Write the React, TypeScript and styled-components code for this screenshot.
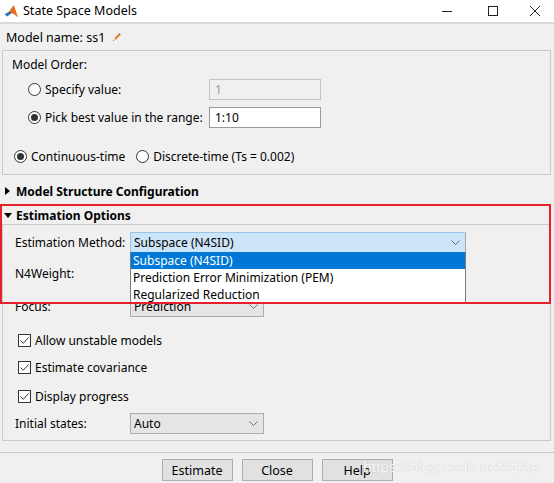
import React from "react";
import styled, { createGlobalStyle } from "styled-components";

const GlobalStyle = createGlobalStyle`
  html, body {
    margin: 0;
    padding: 0;
  }
  body {
    width: 554px;
    height: 483px;
    overflow: hidden;
    background: #f0f0f0;
    font-family: "Noto Sans", "Open Sans", sans-serif;
    font-size: 12px;
    color: #000;
    white-space: nowrap;
  }
  * {
    box-sizing: border-box;
  }
`;

const MatlabIcon = () => (
  <svg width="15" height="15" viewBox="0 0 15 15">
    <path d="M0.5 10.5 L5 7.5 L7.5 9 L3.5 12.5 Z" fill="#2f74b5" />
    <path d="M5 7.5 L9.8 1 L14 13.5 L10.5 10.5 L7.5 9 Z" fill="#e86a1d" />
    <path d="M9.8 1 L11.6 6.5 L14 13.5 Z" fill="#b3301c" />
    <path d="M5 7.5 L7.5 9 L6.5 9.8 Z" fill="#1d4f87" />
  </svg>
);

const PencilIcon = () => (
  <svg width="9" height="9" viewBox="0 0 9 9">
    <path d="M2.2 5.2 L6.4 1 L8 2.6 L3.8 6.8 Z" fill="#d98a2b" />
    <path d="M6.4 1 L7.2 0.2 L8.8 1.8 L8 2.6 Z" fill="#c0504d" />
    <path d="M2.2 5.2 L3.8 6.8 L1 8 Z" fill="#e8d0a8" />
    <path d="M1 8 L1.5 6.8 L2.2 7.5 Z" fill="#555" />
  </svg>
);

const Chevron = () => (
  <svg width="9" height="5" viewBox="0 0 9 5">
    <path d="M0.5 0.5 L4.5 4.5 L8.5 0.5" fill="none" stroke="#6d6d6d" strokeWidth="1" />
  </svg>
);

const CheckMark = () => (
  <svg width="11" height="11" viewBox="0 0 11 11">
    <path d="M1.5 5.5 L4.3 8.3 L9.5 2.5" fill="none" stroke="#333" strokeWidth="1" />
  </svg>
);

const Window = styled.div`
  position: relative;
  width: 554px;
  height: 483px;
  display: flex;
  flex-direction: column;
  background: #f0f0f0;
`;

const TitleBar = styled.div`
  height: 24px;
  background: #fff;
  border-bottom: 2px solid #dadada;
  display: flex;
  align-items: center;
  padding-left: 4px;
`;

const TitleText = styled.span`
  font-size: 12.5px;
  margin-left: 4px;
  flex: 1;
  line-height: 20px;
`;

const CaptionButton = styled.div<{ w: number }>`
  width: ${({ w }) => w}px;
  height: 22px;
  display: flex;
  align-items: center;
  justify-content: center;
`;

const NameRow = styled.div`
  height: 26px;
  display: flex;
  align-items: center;
  padding-left: 6px;
  gap: 7px;
  font-size: 12.5px;
`;

const Panel = styled.div<{ h: number }>`
  height: ${({ h }) => h}px;
  margin: 0 3px 0 2px;
  border: 1px solid #cacaca;
  display: flex;
  flex-direction: column;
`;

const PanelLabel = styled.div`
  height: 26px;
  display: flex;
  align-items: center;
  padding-left: 9px;
`;

const Row = styled.div<{ mt?: number; pl?: number; h?: number }>`
  display: flex;
  align-items: center;
  height: ${({ h }) => h ?? 21}px;
  margin-top: ${({ mt }) => mt ?? 0}px;
  padding-left: ${({ pl }) => pl ?? 0}px;
`;

const OptionCell = styled.div<{ w?: number; ml?: number }>`
  display: flex;
  align-items: center;
  gap: 4px;
  width: ${({ w }) => (w ? `${w}px` : "auto")};
  margin-left: ${({ ml }) => ml ?? 0}px;
  flex-shrink: 0;
`;

const Radio = styled.span<{ checked?: boolean }>`
  width: 13px;
  height: 13px;
  border-radius: 50%;
  border: 1px solid #333;
  background: #fff;
  display: flex;
  align-items: center;
  justify-content: center;
  flex-shrink: 0;

  &::after {
    content: "";
    width: 7px;
    height: 7px;
    border-radius: 50%;
    background: ${({ checked }) => (checked ? "#333" : "transparent")};
  }
`;

const Check = styled.span`
  width: 13px;
  height: 13px;
  border: 1px solid #333;
  background: #fff;
  display: flex;
  align-items: center;
  justify-content: center;
  flex-shrink: 0;
`;

const TextField = styled.div<{ disabled?: boolean }>`
  width: 112px;
  height: 21px;
  border: 1px solid ${({ disabled }) => (disabled ? "#c4c4c4" : "#9a9a9a")};
  background: ${({ disabled }) => (disabled ? "#f0f0f0" : "#fff")};
  color: ${({ disabled }) => (disabled ? "#9c9c9c" : "#000")};
  display: flex;
  align-items: center;
  padding-left: 5px;
`;

const SectionHeader = styled.div<{ h: number }>`
  height: ${({ h }) => h}px;
  display: flex;
  align-items: center;
  padding-left: 4px;
  gap: 4px;
  font-weight: bold;
`;

const Triangle = styled.span<{ open?: boolean }>`
  width: 0;
  height: 0;
  margin-left: ${({ open }) => (open ? 0 : 1)}px;
  margin-right: ${({ open }) => (open ? 0 : 2)}px;
  ${({ open }) =>
    open
      ? `border-left: 4px solid transparent;
         border-right: 4px solid transparent;
         border-top: 5px solid #000;`
      : `border-top: 4px solid transparent;
         border-bottom: 4px solid transparent;
         border-left: 5px solid #000;`}
`;

const FieldLabel = styled.span`
  width: 115px;
  flex-shrink: 0;
`;

const ComboWrap = styled.div`
  position: relative;
`;

const Combo = styled.div<{ w: number; active?: boolean }>`
  width: ${({ w }) => w}px;
  height: 21px;
  border: 1px solid ${({ active }) => (active ? "#9cc4e6" : "#adadad")};
  border-right-color: ${({ active }) => (active ? "#a9a9a9" : "#adadad")};
  background: ${({ active }) => (active ? "#cce4f7" : "#e5e5e5")};
  display: flex;
  align-items: center;
  justify-content: space-between;
  padding: 0 5px 0 3px;
`;

const DropList = styled.div`
  position: absolute;
  top: 20px;
  left: 0;
  width: 336px;
  background: #fff;
  border: 1px solid #7a7a7a;
  border-top: none;
  z-index: 5;
`;

const DropItem = styled.div<{ selected?: boolean }>`
  height: 17px;
  line-height: 17px;
  padding-left: 2px;
  background: ${({ selected }) => (selected ? "#0078d7" : "#fff")};
  color: ${({ selected }) => (selected ? "#fff" : "#000")};
`;

const Separator = styled.div`
  margin-top: 11px;
  height: 1px;
  background: #c9c9c9;
`;

const ButtonBar = styled.div`
  margin-top: 6px;
  display: flex;
  justify-content: center;
  gap: 9px;
`;

const Button = styled.button`
  width: 71px;
  height: 22px;
  border: 1px solid #adadad;
  background: #e1e1e1;
  font-family: inherit;
  font-size: 12.5px;
  color: #000;
  padding: 0;
`;

const Highlight = styled.div`
  position: absolute;
  left: 0;
  top: 204px;
  width: 551px;
  height: 100px;
  border: 2px solid #e8202c;
  pointer-events: none;
  z-index: 10;
`;

const Watermark = styled.div`
  position: absolute;
  left: 363px;
  top: 458px;
  font-family: "Liberation Sans", Arial, sans-serif;
  font-size: 15.5px;
  color: rgba(255, 255, 255, 0.9);
  text-shadow: 0 0 1px #b8b8b8;
  z-index: 11;
`;

const CheckRow: React.FC<{ mt: number; label: string }> = ({ mt, label }) => (
  <Row mt={mt} pl={15}>
    <OptionCell>
      <Check>
        <CheckMark />
      </Check>
      <span>{label}</span>
    </OptionCell>
  </Row>
);

export default function App() {
  return (
    <Window>
      <GlobalStyle />
      <TitleBar>
        <MatlabIcon />
        <TitleText>State Space Models</TitleText>
        <CaptionButton w={46}>
          <svg width="10" height="10" viewBox="0 0 10 10">
            <path d="M0 5.5 H10" stroke="#222" strokeWidth="1" />
          </svg>
        </CaptionButton>
        <CaptionButton w={46}>
          <svg width="10" height="10" viewBox="0 0 10 10">
            <rect x="0.5" y="0.5" width="9" height="9" fill="none" stroke="#222" strokeWidth="1" />
          </svg>
        </CaptionButton>
        <CaptionButton w={38}>
          <svg width="10" height="10" viewBox="0 0 10 10">
            <path d="M0 0 L10 10 M10 0 L0 10" stroke="#222" strokeWidth="1" />
          </svg>
        </CaptionButton>
      </TitleBar>

      <NameRow>
        <span>Model name: ss1</span>
        <PencilIcon />
      </NameRow>

      <Panel h={125}>
        <PanelLabel>Model Order:</PanelLabel>
        <Row h={24} pl={25}>
          <OptionCell w={181}>
            <Radio />
            <span>Specify value:</span>
          </OptionCell>
          <TextField disabled>1</TextField>
        </Row>
        <Row mt={5} h={22} pl={25}>
          <OptionCell w={181}>
            <Radio checked />
            <span>Pick best value in the range:</span>
          </OptionCell>
          <TextField>1:10</TextField>
        </Row>
        <Row mt={17} h={22} pl={11}>
          <OptionCell>
            <Radio checked />
            <span>Continuous-time</span>
          </OptionCell>
          <OptionCell ml={11}>
            <Radio />
            <span>Discrete-time (Ts = 0.002)</span>
          </OptionCell>
        </Row>
      </Panel>

      <SectionHeader h={32}>
        <Triangle />
        <span>Model Structure Configuration</span>
      </SectionHeader>
      <SectionHeader h={17}>
        <Triangle open />
        <span>Estimation Options</span>
      </SectionHeader>

      <Panel h={217}>
        <Row mt={7} pl={12}>
          <FieldLabel>Estimation Method:</FieldLabel>
          <ComboWrap>
            <Combo w={336} active>
              <span>Subspace (N4SID)</span>
              <Chevron />
            </Combo>
            <DropList>
              <DropItem selected>Subspace (N4SID)</DropItem>
              <DropItem>Prediction Error Minimization (PEM)</DropItem>
              <DropItem>Regularized Reduction</DropItem>
            </DropList>
          </ComboWrap>
        </Row>
        <Row mt={10} pl={12}>
          <FieldLabel>N4Weight:</FieldLabel>
        </Row>
        <Row mt={12} pl={12}>
          <FieldLabel>Focus:</FieldLabel>
          <Combo w={134}>
            <span>Prediction</span>
            <Chevron />
          </Combo>
        </Row>
        <CheckRow mt={13} label="Allow unstable models" />
        <CheckRow mt={6} label="Estimate covariance" />
        <CheckRow mt={8} label="Display progress" />
        <Row mt={6} pl={12}>
          <FieldLabel>Initial states:</FieldLabel>
          <Combo w={134}>
            <span>Auto</span>
            <Chevron />
          </Combo>
        </Row>
      </Panel>

      <Separator />
      <ButtonBar>
        <Button>Estimate</Button>
        <Button>Close</Button>
        <Button>Help</Button>
      </ButtonBar>

      <Highlight />
      <Watermark>https://blog.csdn.net/tzlaa</Watermark>
    </Window>
  );
}
